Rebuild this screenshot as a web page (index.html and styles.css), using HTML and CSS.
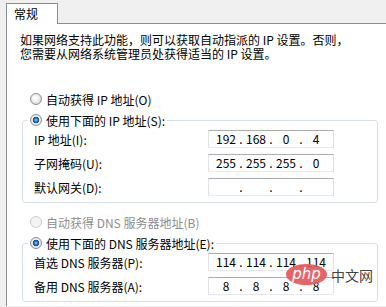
FILE: index.html
```html
<!DOCTYPE html>
<html lang="zh-CN">
<head>
    <meta charset="UTF-8">
    <meta name="viewport" content="width=device-width, initial-scale=1.0">
    <title>Internet 协议版本 4 (TCP/IPv4) 属性</title>
    <link rel="stylesheet" href="styles.css">
</head>
<body>
    <div class="tabbar">
        <div class="tab">常规</div>
        <div class="tab-fill"></div>
    </div>

    <div class="panel">
        <p class="intro">如果网络支持此功能，则可以获取自动指派的 IP 设置。否则，<br>您需要从网络系统管理员处获得适当的 IP 设置。</p>

        <label class="radio-row first"><input type="radio" name="ip">自动获得 IP 地址(O)</label>
        <fieldset class="group">
            <legend><label class="radio-row"><input type="radio" name="ip" checked>使用下面的 IP 地址(S):</label></legend>
            <div class="fields">
                <span>IP 地址(I):</span>
                <div class="ipbox"><span>192</span><i>.</i><span>168</span><i>.</i><span>0</span><i>.</i><span>4</span></div>
                <span>子网掩码(U):</span>
                <div class="ipbox"><span>255</span><i>.</i><span>255</span><i>.</i><span>255</span><i>.</i><span>0</span></div>
                <span>默认网关(D):</span>
                <div class="ipbox"><span></span><i>.</i><span></span><i>.</i><span></span><i>.</i><span></span></div>
            </div>
        </fieldset>

        <label class="radio-row first disabled"><input type="radio" name="dns" disabled>自动获得 DNS 服务器地址(B)</label>
        <fieldset class="group">
            <legend><label class="radio-row"><input type="radio" name="dns" checked>使用下面的 DNS 服务器地址(E):</label></legend>
            <div class="fields">
                <span>首选 DNS 服务器(P):</span>
                <div class="ipbox"><span>114</span><i>.</i><span>114</span><i>.</i><span>114</span><i>.</i><span>114</span></div>
                <span>备用 DNS 服务器(A):</span>
                <div class="ipbox"><span>8</span><i>.</i><span>8</span><i>.</i><span>8</span><i>.</i><span>8</span></div>
            </div>
        </fieldset>
    </div>

    <div class="watermark">
        <span class="wm-php">php</span>
        <span class="wm-cn">中文网</span>
    </div>
</body>
</html>
```

FILE: styles.css
```css
body { margin: 0; background: #f0f0f0; color: #000; font: 12px/13px "Noto Sans CJK SC", "Liberation Sans", sans-serif; overflow: hidden; }

.tabbar { display: flex; padding: 3px 0 0 6px; }
.tab { width: 52px; height: 21px; box-sizing: border-box; padding: 3px 0 0 7px; background: #fff; border: 1px solid #898c95; border-bottom: none; }
.tab-fill { flex: 1; border-bottom: 1px solid #898c95; }

.panel { margin-left: 6px; padding: 9px 0 4px 13px; background: #fff; border-left: 1px solid #898c95; }
.intro { margin: 0; line-height: 14px; }

.radio-row { display: flex; align-items: center; height: 14px; white-space: nowrap; }
.radio-row.first { margin: 31px 0 0 10px; }
.radio-row.disabled { color: #8d8d8d; }
.group + .radio-row.first { margin-top: 12px; }

input[type=radio] { appearance: none; width: 12px; height: 12px; margin: 0 4px 0 0; border: 1px solid #8c8f94; border-radius: 50%; background: radial-gradient(circle at 45% 40%, #fff 0, #f2f2f2 3px, #d6d6d6 6px); }
input[type=radio]:checked { background: radial-gradient(circle at 50% 50%, #8fd0fa 0, #2f84d2 1.5px, #154a8a 3px, #f4f4f4 3.6px, #d9d9d9 6px); }
input[type=radio]:disabled { border-color: #c9cacc; background: #f4f4f4; }

.group { margin: 7px 8px 0 2px; padding: 3px 0 6px 11px; border: 1px solid #d5dfe5; border-radius: 3px; min-inline-size: 0; }
.group legend { margin-left: -6px; padding: 0 2px; }

.fields { display: grid; grid-template-columns: 174px 126px; grid-auto-rows: 18px; row-gap: 6px; align-items: center; }

.ipbox { display: grid; grid-template-columns: 24px 6px 24px 6px 24px 6px 24px; height: 18px; box-sizing: border-box; padding-left: 5px; align-items: center; text-align: center; line-height: 16px; background: #fff; border: 1px solid; border-color: #abadb3 #dbdfe6 #e3e9ef #e2e3ea; }
.ipbox i { font-style: normal; }

.watermark { position: absolute; left: 286px; top: 264px; display: flex; align-items: center; gap: 4px; opacity: 0.92; }
.wm-php { width: 41px; height: 21px; border-radius: 50%; background: #e4585b; color: #fff; font: italic 15px/20px "DejaVu Sans", sans-serif; text-align: center; }
.wm-cn { color: #333; font: 14px/16px "Noto Sans CJK SC", sans-serif; }
```
